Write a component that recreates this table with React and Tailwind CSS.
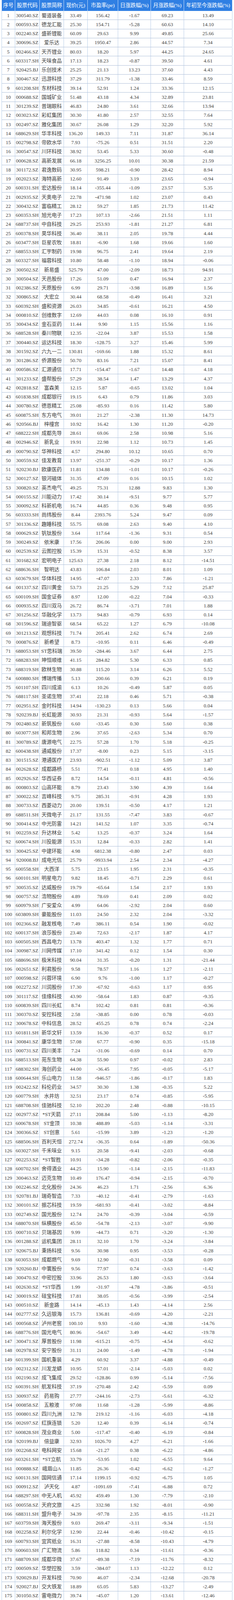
import React from 'react';

// 股票列表: 代码|简称|现价|市盈率|日涨跌|月涨跌|年初至今
const rows = [
  '300540.SZ|蜀道装备|33.49|156.42|-1.67|69.23|13.49',
  '000593.SZ|德龙汇能|25.30|154.71|-5.28|60.63|14.10',
  '002240.SZ|盛新锂能|60.09|29.63|9.99|49.85|25.66',
  '300696.SZ|爱乐达|39.25|1950.47|2.86|44.57|7.34',
  '002466.SZ|天齐锂业|80.03|18.20|5.97|44.25|24.65',
  '603317.SH|天味食品|17.13|18.23|-0.87|39.50|4.61',
  '920425.BJ|乐创技术|25.25|21.13|13.23|37.60|4.43',
  '300467.SZ|迅游科技|37.29|311.79|-1.38|33.46|8.59',
  '601208.SH|东材科技|39.14|52.91|1.24|33.36|12.15',
  '000688.SZ|国城矿业|51.48|43.18|4.34|32.89|23.81',
  '301239.SZ|普瑞眼科|46.83|24.80|3.61|32.66|13.94',
  '003023.SZ|彩虹集团|30.30|41.80|2.57|32.55|7.64',
  '002497.SZ|雅化集团|30.67|26.08|1.29|32.20|5.92',
  '688629.SH|华丰科技|136.20|149.33|7.11|31.87|36.14',
  '002798.SZ|帝欧水华|7.93|-75.26|0.51|31.51|2.20',
  '300547.SZ|川环科技|38.92|53.45|5.33|30.60|-0.48',
  '000628.SZ|高新发展|66.18|3256.25|10.01|30.38|21.59',
  '301172.SZ|君逸数码|30.95|598.21|-0.90|28.42|8.94',
  '002023.SZ|海特高新|12.60|91.49|3.19|23.65|-0.94',
  '600331.SH|宏达股份|18.14|-355.44|-1.09|23.57|5.35',
  '002935.SZ|天奥电子|22.78|-471.98|1.02|23.07|0.43',
  '300432.SZ|富临精工|28.12|59.27|1.85|21.73|11.42',
  '600353.SH|旭光电子|17.23|107.13|-2.66|21.51|1.11',
  '688737.SH|中自科技|29.25|253.93|-1.81|21.27|6.81',
  '600378.SH|昊华科技|36.40|38.11|2.05|19.78|4.44',
  '603477.SH|巨星农牧|18.81|-6.90|1.68|19.66|1.60',
  '688553.SH|汇宇制药|19.98|96.75|2.41|19.64|2.19',
  '603327.SH|福蓉科技|10.80|58.48|-1.10|18.94|-0.06',
  '300502.SZ|新易盛|525.79|47.00|-2.09|18.73|94.91',
  '300504.SZ|天邑股份|17.26|51.09|0.47|16.94|2.37',
  '002386.SZ|天原股份|6.99|29.71|-3.98|16.89|1.56',
  '300865.SZ|大宏立|30.44|68.58|-0.49|16.41|3.21',
  '600392.SH|盛和资源|26.03|34.85|-0.61|16.21|4.50',
  '000810.SZ|创维数字|12.69|44.03|0.08|16.10|0.91',
  '300434.SZ|金石亚药|11.44|9.90|1.15|15.56|1.16',
  '688528.SH|秦川物联|12.35|-22.04|3.87|15.53|1.58',
  '300440.SZ|运达科技|18.30|-128.75|3.27|15.46|5.99',
  '301592.SZ|六九一二|130.81|-169.66|1.88|15.32|8.61',
  '301286.SZ|侨源股份|50.70|83.16|7.21|15.07|8.41',
  '000586.SZ|汇源通信|17.71|-154.47|-1.67|14.48|4.18',
  '301233.SZ|盛帮股份|57.29|38.54|1.47|13.29|4.37',
  '002818.SZ|富森美|12.15|5.87|-0.65|13.02|1.04',
  '601838.SH|成都银行|19.15|6.43|0.79|11.86|3.03',
  '300780.SZ|德恩精工|25.08|-85.93|0.16|11.42|5.80',
  '600875.SH|东方电气|39.01|21.27|-2.38|11.30|14.73',
  '920566.BJ|梓橦宫|10.92|16.42|1.30|11.20|-0.20',
  '688222.SH|成都先导|28.61|69.06|2.58|10.98|5.16',
  '002946.SZ|新乳业|19.91|22.98|1.12|10.73|1.45',
  '000790.SZ|华神科技|4.57|294.80|10.12|10.65|0.70',
  '300559.SZ|佳发教育|13.97|-251.37|-0.29|10.17|1.36',
  '920230.BJ|欧康医药|11.81|134.88|-1.01|10.17|-0.26',
  '300127.SZ|银河磁体|31.35|47.09|0.16|10.15|1.02',
  '300820.SZ|英杰电气|49.25|75.31|12.88|9.83|1.30',
  '000155.SZ|川能动力|17.42|30.14|-9.51|9.77|5.77',
  '300092.SZ|科新机电|16.74|44.85|0.36|9.48|0.95',
  '603333.SH|尚纬股份|8.44|2393.76|5.24|9.47|0.09',
  '301336.SZ|趣睡科技|55.75|69.08|2.63|9.40|4.10',
  '000629.SZ|钒钛股份|3.64|117.64|-1.36|9.31|0.54',
  '300249.SZ|依米康|17.56|206.06|0.00|9.00|2.93',
  '002539.SZ|云图控股|15.39|15.31|-0.52|8.38|3.57',
  '301682.SZ|宏明电子|125.63|27.38|2.18|8.12|-14.51',
  '688636.SH|智明达|43.83|106.84|2.03|8.01|1.09',
  '603679.SH|华体科技|14.95|-47.07|2.33|7.86|-1.21',
  '001337.SZ|四川黄金|53.73|21.25|5.29|7.12|25.87',
  '600109.SH|国金证券|8.97|12.00|-0.22|7.04|-0.33',
  '000935.SZ|四川双马|26.72|86.74|-3.71|7.01|1.88',
  '301256.SZ|华融化学|13.73|94.83|-0.79|6.93|0.14',
  '301596.SZ|瑞迪智驱|68.54|65.22|1.27|6.79|-10.08',
  '301213.SZ|观想科技|71.74|205.41|2.62|6.74|2.69',
  '000876.SZ|新希望|8.73|-10.95|0.11|6.46|-0.49',
  '688053.SH|ST思科瑞|39.50|-284.46|3.67|6.44|2.75',
  '688283.SH|坤恒顺维|41.15|284.82|5.30|6.33|0.85',
  '688319.SH|欧林生物|30.88|115.20|3.14|6.26|5.52',
  '600880.SH|博瑞传播|5.13|200.66|0.39|6.21|0.19',
  '601107.SH|四川成渝|6.13|10.26|-0.49|5.87|0.05',
  '688117.SH|圣诺生物|37.41|22.18|0.46|5.71|-0.38',
  '002951.SZ|金时科技|14.94|-130.23|0.13|5.66|0.04',
  '920239.BJ|长虹能源|30.93|21.31|-0.93|5.64|-1.57',
  '002480.SZ|新筑股份|6.60|-33.45|0.30|5.60|0.38',
  '603077.SH|和邦生物|2.96|37.65|-2.63|5.34|0.70',
  '300789.SZ|唐源电气|22.75|57.28|1.70|5.18|-0.25',
  '600438.SH|通威股份|17.37|-8.00|0.23|5.15|-3.15',
  '301515.SZ|港通医疗|23.93|-902.51|-1.12|5.09|3.87',
  '002628.SZ|成都路桥|5.51|77.41|0.18|4.95|1.40',
  '002926.SZ|华西证券|8.72|14.54|-0.11|4.81|-0.56',
  '000803.SZ|山高环能|8.79|23.43|3.90|4.39|1.64',
  '300022.SZ|吉峰科技|9.75|285.31|-0.91|4.28|1.93',
  '300733.SZ|西菱动力|20.00|139.51|-0.50|4.17|1.21',
  '688511.SH|天微电子|21.17|131.55|-7.47|3.83|-0.67',
  '300414.SZ|中光防雷|14.21|141.52|1.07|3.35|-0.74',
  '002259.SZ|升达林业|5.42|13.25|-0.37|3.24|1.64',
  '600674.SH|川投能源|15.31|12.84|-0.33|2.82|1.41',
  '300425.SZ|中建环能|4.98|6812.38|-0.80|2.47|0.03',
  '920008.BJ|成电光信|25.79|-9933.94|2.54|2.34|-4.27',
  '600558.SH|大西洋|5.75|23.15|1.95|2.31|-0.35',
  '600101.SH|明星电力|9.82|18.45|-0.71|2.29|0.61',
  '300535.SZ|达威股份|19.79|-65.64|1.54|2.17|1.93',
  '000757.SZ|浩物股份|4.89|78.69|0.41|2.09|0.02',
  '600979.SH|广安爱众|4.99|64.06|-2.92|2.04|0.60',
  '603809.SH|豪能股份|11.03|24.50|2.32|2.04|-3.32',
  '002366.SZ|融发核电|7.49|386.11|0.54|1.90|-0.02',
  '600137.SH|浪莎股份|23.40|72.63|-2.17|1.87|4.17',
  '600505.SH|西昌电力|13.78|403.47|1.32|1.77|0.71',
  '300987.SZ|川网传媒|17.10|341.42|0.12|1.54|0.30',
  '688696.SH|极米科技|90.04|31.35|-0.20|1.31|-21.44',
  '002651.SZ|利君股份|9.58|78.57|1.16|1.27|-2.11',
  '000598.SZ|兴蓉环境|6.90|9.76|-1.00|1.17|-0.27',
  '002272.SZ|川润股份|17.30|-67.92|-0.63|1.17|0.95',
  '301117.SZ|佳缘科技|43.90|-58.64|1.83|0.87|-9.35',
  '600839.SH|四川长虹|8.74|102.42|0.81|0.81|-0.36',
  '300370.SZ|安控科技|2.58|-38.85|0.00|0.78|-0.03',
  '300678.SZ|中科信息|28.52|455.25|0.78|0.74|-2.24',
  '601811.SH|新华文轩|13.59|16.30|-0.37|0.52|0.17',
  '300841.SZ|康华生物|57.08|67.77|-0.90|0.35|-15.18',
  '000731.SZ|四川美丰|7.24|-31.06|-0.69|0.14|0.70',
  '688513.SH|苑东生物|64.38|55.90|0.97|-0.02|2.83',
  '688302.SH|海创药业|44.00|-36.45|7.95|-0.05|-5.17',
  '600644.SH|乐山电力|11.58|-946.57|-1.86|-0.17|1.83',
  '002422.SZ|科伦药业|34.57|30.30|1.38|-0.35|5.22',
  '600779.SH|水井坊|32.51|23.17|0.74|-0.85|-5.95',
  '688708.SH|佳驰科技|52.10|202.20|2.48|-0.88|-10.15',
  '002977.SZ|*ST天箭|27.11|208.84|5.00|-1.13|-8.20',
  '600678.SH|ST金顶|10.38|488.89|-5.03|-1.14|-3.31',
  '300366.SZ|ST创意|5.61|-15.99|3.89|-1.23|-1.20',
  '688506.SH|百利天恒|272.74|-36.35|0.64|-1.89|-50.36',
  '603027.SH|千禾味业|9.15|20.58|-9.41|-2.03|-0.68',
  '002253.SZ|*ST智胜|10.91|-34.28|-0.82|-2.06|-0.35',
  '600702.SH|舍得酒业|44.25|15.90|-1.14|-2.15|-11.83',
  '300463.SZ|迈克生物|10.49|176.47|-0.94|-2.15|-0.70',
  '002246.SZ|北化股份|24.36|46.23|1.71|-2.56|6.36',
  '920781.BJ|瑞奇智造|7.33|-40.12|-0.41|-2.79|-1.63',
  '300101.SZ|振芯科技|19.59|-681.93|-0.41|-3.02|-8.84',
  '002749.SZ|国光股份|12.74|24.70|-0.39|-3.04|-0.59',
  '688070.SH|纵横股份|45.50|-54.78|-2.13|-3.07|-9.90',
  '000710.SZ|贝瑞基因|9.99|-44.73|0.71|-3.20|-1.30',
  '001288.SZ|运机集团|28.11|32.10|1.70|-3.24|-3.84',
  '920675.BJ|秉扬科技|9.56|30.98|0.95|-3.53|-0.28',
  '603053.SH|成都燃气|9.69|12.90|-0.31|-3.58|0.09',
  '920260.BJ|中寰股份|9.56|77.97|0.74|-3.63|-1.42',
  '300470.SZ|中密控股|33.96|26.53|1.80|-3.63|-3.64',
  '002630.SZ|*ST华西|1.99|-31.97|-4.78|-3.86|-0.51',
  '300019.SZ|硅宝科技|17.81|38.05|-0.56|-3.99|-2.54',
  '000510.SZ|新金路|14.14|-45.13|1.43|-4.14|2.56',
  '002777.SZ|久远银海|15.73|136.81|-0.69|-4.20|-2.21',
  '000568.SZ|泸州老窖|100.10|9.93|-1.60|-4.38|-14.76',
  '688776.SH|国光电气|80.96|-54.67|3.49|-4.42|-19.78',
  '300471.SZ|厚普股份|11.98|-615.21|-0.75|-4.54|-0.62',
  '002978.SZ|安宁股份|31.11|24.00|-1.49|-4.78|-1.94',
  '601399.SH|国机重装|4.29|60.92|3.37|-4.88|-0.49',
  '002312.SZ|川发龙蟒|10.95|57.01|-2.14|-5.03|0.02',
  '002190.SZ|成飞集成|29.52|-128.86|0.99|-5.14|-7.56',
  '600391.SH|航发科技|37.19|-270.48|2.42|-5.59|0.09',
  '300937.SZ|药易购|27.77|-244.16|-2.73|-5.61|-6.32',
  '000858.SZ|五粮液|97.08|11.68|-1.28|-5.99|-8.86',
  '000801.SZ|四川九洲|12.78|219.12|-1.16|-6.03|-4.18',
  '002697.SZ|红旗连锁|5.20|12.40|0.39|-6.14|-0.74',
  '600828.SH|茂业商业|5.00|-117.47|-0.40|-6.19|-0.84',
  '920199.BJ|倍益康|32.93|1026.70|4.27|-6.21|-1.66',
  '002268.SZ|电科网安|15.68|-21.27|0.38|-6.22|-4.86',
  '603261.SH|*ST立航|33.79|-53.95|1.02|-6.55|9.64',
  '000888.SZ|峨眉山A|11.85|26.36|-0.42|-6.62|-1.27',
  '600131.SH|国网信通|17.14|1199.15|-0.92|-6.75|1.05',
  '000912.SZ|泸天化|4.87|-1091.69|-7.41|-6.88|0.72',
  '688297.SH|中无人机|45.92|459.49|1.30|-7.79|-2.10',
  '000558.SZ|天府文旅|4.25|332.98|1.92|-8.01|-0.90',
  '688311.SH|盟升电子|34.39|-97.78|2.35|-8.15|-11.21',
  '603759.SH|海天股份|9.03|269.47|-3.11|-9.34|-1.51',
  '002258.SZ|利尔化学|12.90|22.44|-0.46|-10.42|-0.15',
  '600793.SH|宜宾纸业|16.31|-27.88|-8.58|-10.43|-4.79',
  '600603.SH|广汇物流|5.86|118.82|0.34|-11.61|-0.36',
  '688709.SH|成都华微|37.67|-89.38|-7.19|-11.76|-8.32',
  '000509.SZ|华塑控股|3.59|-384.07|1.13|-12.22|0.12',
  '920029.BJ|开发科技|70.90|46.07|-2.34|-12.68|-20.78',
  '920027.BJ|交大铁发|18.89|65.05|5.83|-13.27|-2.49',
  '301050.SZ|雷电微力|39.74|-45.07|1.20|-13.61|-12.46',
  '300492.SZ|华图山鼎|49.78|20.18|-1.07|-13.73|-24.52',
  '002773.SZ|康弘药业|24.63|18.45|-1.00|-14.78|-5.34',
  '920943.BJ|优机股份|17.02|-54.54|-13.16|-14.94|-9.43',
  '600039.SH|四川路桥|8.19|11.91|-6.29|-18.67|-1.76',
  '002357.SZ|富临运业|11.72|14.02|3.81|-18.95|1.05',
];

const headers = ['序号', '股票代码', '股票简称', '现价(元)', '市盈率(pe)', '日涨跌幅(%)', '月涨跌幅(%)', '年初至今涨跌幅(%)'];

const gridCols = 'grid grid-cols-[33.5px_63.5px_62px_61px_78px_84px_85px_124px]';
const fontStack = { fontFamily: '"Liberation Serif", "Noto Sans CJK SC", serif' };

export default function App() {
  return (
    <div className="w-[600px] bg-white pl-[4px] pb-[3px]" style={fontStack}>
      <div className="w-[591px] border-l border-[#b7cde8]">
        {/* 表头 */}
        <div className={`${gridCols} h-[28px] bg-[#2f7fe3] text-white text-[13.5px]`}>
          {headers.map((h) => (
            <div
              key={h}
              className="flex items-center justify-center border-r border-[#cfe0f7] whitespace-nowrap overflow-hidden tracking-[-0.2px]"
            >
              {h}
            </div>
          ))}
        </div>

        {/* 数据行 */}
        {rows.map((line, idx) => {
          const cells = [String(idx + 1), ...line.split('|')];
          return (
            <div
              key={idx}
              className={`${gridCols} h-[23.25px] border-b border-[#aebfd8] text-[13px] text-[#3d3d3d] bg-white`}
            >
              {cells.map((c, i) => (
                <div
                  key={i}
                  className="flex items-center justify-center border-r border-[#b7cde8] whitespace-nowrap overflow-hidden leading-none"
                >
                  {c}
                </div>
              ))}
            </div>
          );
        })}
      </div>
    </div>
  );
}
